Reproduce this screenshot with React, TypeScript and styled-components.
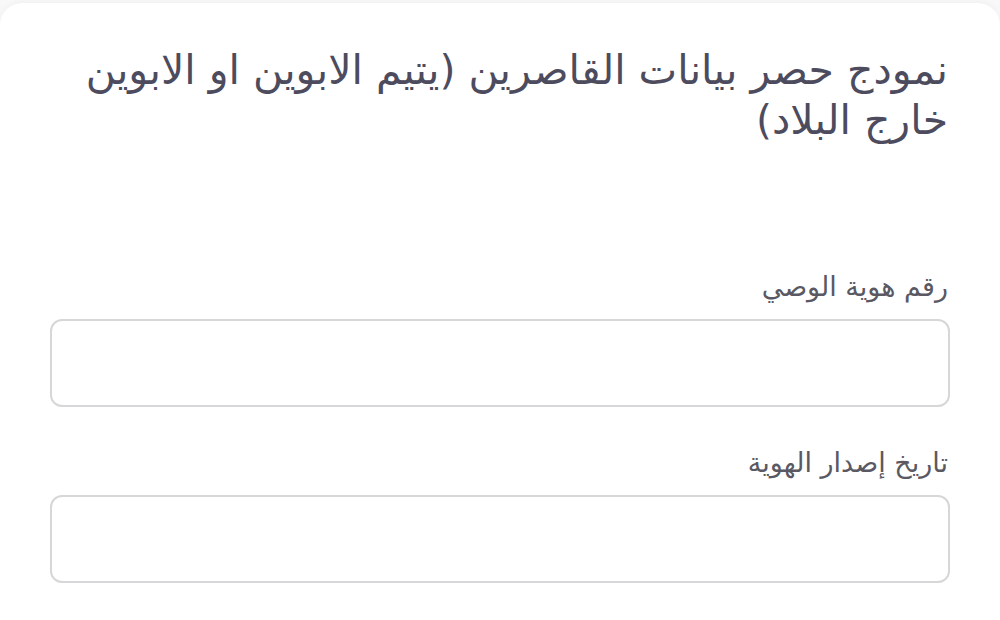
import styled, { createGlobalStyle } from "styled-components";

const GlobalStyle = createGlobalStyle`
  html, body {
    margin: 0;
    padding: 0;
    background: #f8f8f9;
  }
  body {
    font-family: "DejaVu Sans", "Noto Sans", sans-serif;
  }
`;

const Page = styled.div`
  width: 1000px;
  height: 620px;
  overflow: hidden;
  padding-top: 3px;
  box-sizing: border-box;
`;

const Card = styled.div`
  direction: rtl;
  background: #ffffff;
  border-radius: 22px 22px 0 0;
  box-shadow: 0 -1px 6px rgba(0, 0, 0, 0.04);
  min-height: 640px;
  padding: 42px 50px 0 50px;
  box-sizing: border-box;
`;

const Title = styled.h1`
  margin: 0 2px 0 0;
  font-size: 41px;
  line-height: 50px;
  font-weight: 400;
  color: #4d4c5e;
`;

const Form = styled.div`
  margin-top: 126px;
  display: flex;
  flex-direction: column;
  gap: 40px;
`;

const Field = styled.div`
  display: flex;
  flex-direction: column;
  gap: 16px;
`;

const Label = styled.label`
  font-size: 27px;
  line-height: 32px;
  color: #5a5963;
  margin-right: 2px;
`;

const Input = styled.input`
  height: 88px;
  border: 2px solid #d7d7d9;
  border-radius: 12px;
  background: #fff;
  box-sizing: border-box;
  padding: 0 16px;
  font-size: 20px;
  outline: none;
`;

const fields = ["رقم هوية الوصي", "تاريخ إصدار الهوية"];

export default function App() {
  return (
    <Page>
      <GlobalStyle />
      <Card>
        <Title>
          نمودج حصر بيانات القاصرين (يتيم الابوين او الابوين خارج البلاد)
        </Title>
        <Form>
          {fields.map((label) => (
            <Field key={label}>
              <Label>{label}</Label>
              <Input type="text" />
            </Field>
          ))}
        </Form>
      </Card>
    </Page>
  );
}
